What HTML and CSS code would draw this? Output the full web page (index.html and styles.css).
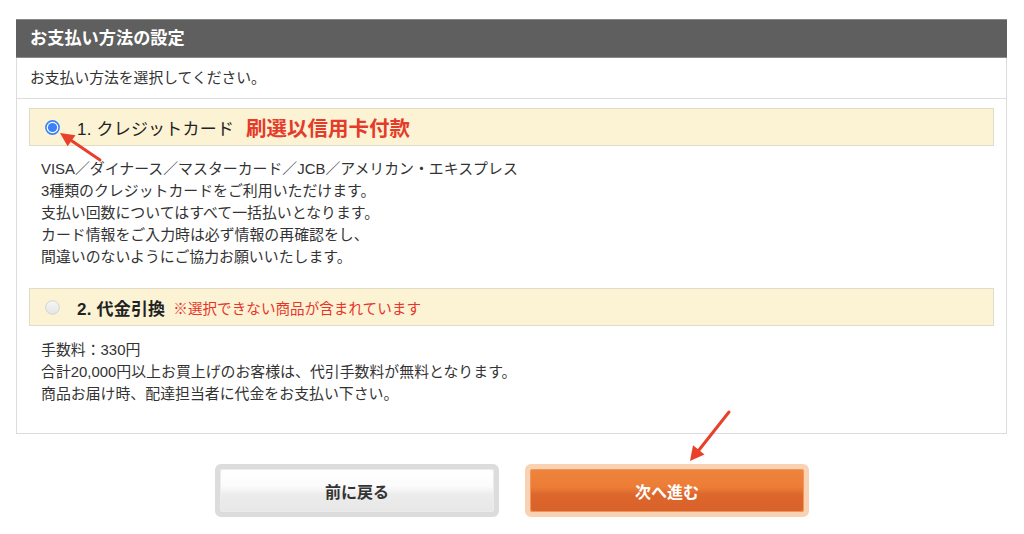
FILE: index.html
```html
<!DOCTYPE html>
<html lang="ja">
<head>
<meta charset="utf-8">
<title>お支払い方法の設定</title>
<link rel="stylesheet" href="styles.css">
</head>
<body>
<div class="page">
  <section class="panel">
    <h2 class="panel-head">お支払い方法の設定</h2>
    <p class="panel-desc">お支払い方法を選択してください。</p>
    <div class="panel-body">
      <div class="option">
        <svg class="radio" width="15" height="15" viewBox="0 0 15 15"><circle cx="7.5" cy="7.5" r="6.6" fill="#fff" stroke="#3a80f6" stroke-width="1.6"/><circle cx="7.5" cy="7.5" r="4.6" fill="#3a80f6"/></svg>
        <span class="opt-label">1. クレジットカード</span>
        <span class="opt-note-big">刷選以信用卡付款</span>
      </div>
      <div class="opt-text">
        VISA／ダイナース／マスターカード／JCB／アメリカン・エキスプレス<br>
        3種類のクレジットカードをご利用いただけます。<br>
        支払い回数についてはすべて一括払いとなります。<br>
        カード情報をご入力時は必ず情報の再確認をし、<br>
        間違いのないようにご協力お願いいたします。
      </div>
      <div class="option option-2">
        <svg class="radio" width="15" height="15" viewBox="0 0 15 15"><defs><linearGradient id="rg" x1="0" y1="0" x2="0" y2="1"><stop offset="0" stop-color="#f7f7f7"/><stop offset="1" stop-color="#e4e4e4"/></linearGradient></defs><circle cx="7.5" cy="7.5" r="6.8" fill="url(#rg)" stroke="#d2d2d2" stroke-width="1"/></svg>
        <span class="opt-label opt-label-bold">2. 代金引換</span>
        <span class="opt-note">※選択できない商品が含まれています</span>
      </div>
      <div class="opt-text opt-text-2">
        手数料：330円<br>
        合計20,000円以上お買上げのお客様は、代引手数料が無料となります。<br>
        商品お届け時、配達担当者に代金をお支払い下さい。
      </div>
    </div>
  </section>
  <div class="buttons">
    <button class="btn btn-back" type="button"><span class="btn-inner">前に戻る</span></button>
    <button class="btn btn-next" type="button"><span class="btn-inner">次へ進む</span></button>
  </div>
  <svg class="arrows" width="1024" height="534" viewBox="0 0 1024 534">
    <line x1="100" y1="160" x2="72" y2="141" stroke="#e8402a" stroke-width="3" stroke-linecap="round"/>
    <polygon points="60,133 75.5,135.3 67.6,146.3" fill="#e8402a"/>
    <line x1="729" y1="412" x2="699" y2="450" stroke="#e8402a" stroke-width="3" stroke-linecap="round"/>
    <polygon points="690,461 704.5,454.6 693,445.3" fill="#e8402a"/>
  </svg>
</div>
</body>
</html>
```

FILE: styles.css
```css
* { box-sizing: border-box; }
html, body {
  margin: 0;
  padding: 0;
  background: #fff;
}
body {
  font-family: "Liberation Sans", "Noto Sans CJK JP", sans-serif;
  color: #333;
}
.page {
  position: relative;
  width: 1024px;
  height: 534px;
  padding: 19px 17px 0 16px;
}
.panel {
  border: 1px solid #dcdcdc;
  border-top: none;
}
.panel-head {
  margin: 0 -1px;
  height: 39px;
  background: #5f5f5f;
  border-top: 1px solid #8a8a8a;
  border-bottom: 1px solid #8a8a8a;
  color: #fff;
  font-size: 17.2px;
  font-weight: 600;
  line-height: 37px;
  padding-left: 14px;
}
.panel-desc {
  margin: 0;
  height: 41px;
  border-bottom: 1px solid #dedede;
  font-size: 14.8px;
  line-height: 40px;
  padding-left: 13px;
  color: #333;
}
.panel-body {
  padding: 9px 12px 28px 12px;
}
.option {
  display: flex;
  align-items: center;
  height: 38px;
  background: #fcf3d4;
  border: 1px solid #e2dcc6;
  padding-left: 15px;
}
.option-2 { margin-top: 20px; }
.radio { flex: none; }
.opt-label {
  margin-left: 17px;
  font-size: 17px;
  color: #222;
  letter-spacing: 0.2px;
}
.opt-label-bold { font-weight: bold; }
.opt-note-big {
  margin-left: 12px;
  font-size: 20.5px;
  font-weight: bold;
  color: #e53b2b;
}
.opt-note {
  margin-left: 8px;
  font-size: 14.6px;
  color: #e8352b;
}
.opt-text {
  padding: 12px 0 0 12px;
  font-size: 14.9px;
  line-height: 22px;
  color: #333;
}
.opt-text-2 { padding-top: 13px; }
.buttons {
  display: flex;
  justify-content: center;
  gap: 26px;
  margin-top: 30px;
  padding-left: 1px;
}
.btn {
  width: 284px;
  height: 53px;
  padding: 0;
  border: 5px solid #dcdcdc;
  border-radius: 6px;
  background: #dcdcdc;
  font-family: inherit;
  cursor: pointer;
}
.btn-inner {
  display: flex;
  align-items: center;
  justify-content: center;
  height: 100%;
  border-radius: 3px;
  font-size: 16px;
  font-weight: bold;
}
.btn-back .btn-inner {
  color: #333;
  background: linear-gradient(#ffffff 0%, #fbfbfb 40%, #ececec 60%, #e7e7e7 100%);
  box-shadow: inset 0 0 0 1px #ececec;
}
.btn-next {
  border-color: #f8d2b3;
  background: #f8d2b3;
}
.btn-next .btn-inner {
  color: #fff;
  background: linear-gradient(#ef843c 0%, #ec7d37 42%, #dc662c 60%, #d9622a 100%);
  box-shadow: inset 0 0 0 1px #f1955a;
}
.arrows {
  position: absolute;
  left: 0;
  top: 0;
  pointer-events: none;
}
```
